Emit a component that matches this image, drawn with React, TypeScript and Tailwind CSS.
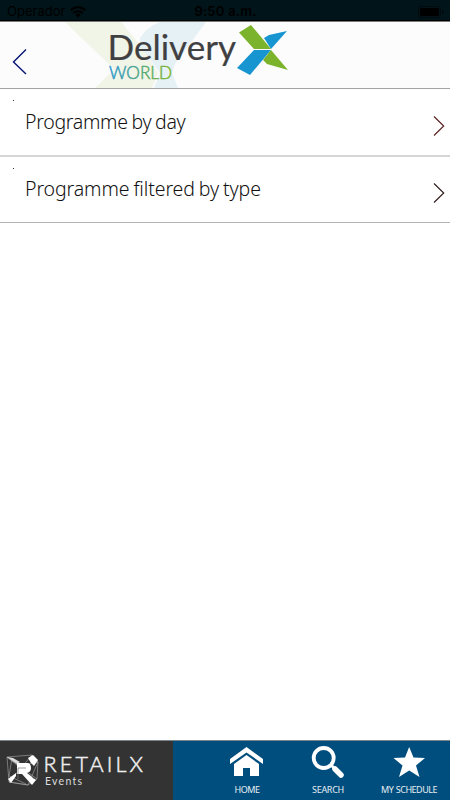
import React from "react";

function StatusBar() {
  return (
    <div className="flex h-[22px] shrink-0 items-center border-b border-[#777b7a] bg-[#001419] pt-[2px] font-['Inter','Liberation_Sans',sans-serif] text-[13px] leading-none text-black shadow-[inset_0_-1px_0_#000]">
      <div className="flex flex-1 items-center gap-[5px] pl-[7px]">
        <span className="w-[58px] tracking-[0.02px]">Operador</span>
        <svg width="16" height="12" viewBox="0 0 16 12" fill="none" stroke="#000" strokeWidth="2">
          <path d="M.8 4.3a10.3 10.3 0 0 1 14.4 0M3.4 7a6.6 6.6 0 0 1 9.2 0" />
          <path d="M5.3 8.800a3.900 3.900 0 0 1 5.400 0L8 11.500z" fill="#000" stroke="none" />
        </svg>
      </div>
      <span className="font-semibold tracking-[0.25px]">9:50 a.m.</span>
      <div className="flex flex-1 justify-end pr-[6px]">
        <svg width="26" height="12" viewBox="0 0 26 12">
          <rect x=".5" y=".5" width="22" height="11" rx="3" fill="none" stroke="#000a0d" />
          <rect x="2" y="2" width="19" height="8" rx="1.5" />
          <path d="M24 4c2 .5 2 3.500 0 4z" fill="#000a0d" />
        </svg>
      </div>
    </div>
  );
}

function Header() {
  return (
    <header className="h-[67px] shrink-0 border-b border-[#a3a3a3] bg-[#fcfcfc]">
      <svg width="450" height="66" viewBox="0 22 450 66" className="block">
        <defs>
          <linearGradient id="world" x1="109" x2="172" y1="0" y2="0" gradientUnits="userSpaceOnUse">
            <stop stopColor="#2697d3" />
            <stop offset="1" stopColor="#7fb72d" />
          </linearGradient>
        </defs>
        <path d="M65 22H121L144 50L158 73L152 88H95L114 69Z" fill="#f1f5e7" />
        <path d="M140 38Q147 27 160 22H206L175 64L172 73L178 88H154L160 73L140 46Z" fill="#e6f1f6" />
        <path d="M26 49.500L13.500 62L26 74" fill="none" stroke="#061474" strokeWidth="1.400" />
        <text x="107.500" y="60" textLength="128.500" lengthAdjust="spacingAndGlyphs" fontFamily="Lato, sans-serif" fontSize="34.500" fill="#404042" stroke="#404042" strokeWidth=".2">Delivery</text>
        <text x="109" y="79" textLength="63" lengthAdjust="spacingAndGlyphs" fontFamily="Lato, sans-serif" fontSize="17" fontWeight="300" fill="url(#world)" stroke="url(#world)" strokeWidth=".5">WORLD</text>
        <path d="M239 32.500L251 25L271 49H254Z" fill="#7cb32c" />
        <path d="M264 38L269 35L287 31L271 49Z" fill="#1795d0" />
        <path d="M254 50H271L250 75L237 68Z" fill="#1795d0" />
        <path d="M271 50L288 70L267 64L263 60Z" fill="#7cb32c" />
      </svg>
    </header>
  );
}

function Row({ label, stroke, className, textClass }: { label: string; stroke: string; className: string; textClass: string }) {
  return (
    <div className={`flex items-center justify-between pl-[13px] pr-[5px] ${className}`}>
      <div className="flex h-full">
        <span className="mt-[11px] h-px w-px bg-[#333]" />
        <span className={`ml-[11px] font-['Noto_Sans','Open_Sans',sans-serif] text-[19.5px] leading-[27px] font-light whitespace-nowrap text-[#111] ${textClass}`}>{label}</span>
      </div>
      <svg width="12" height="20" viewBox="0 0 12 20" className="mt-[7px]" fill="none" stroke={stroke} strokeWidth="1.200">
        <path d="M1 .5L10.700 10L1 19.500" />
      </svg>
    </div>
  );
}

function Brand() {
  return (
    <div className="w-[173px] bg-[#333]">
      <svg width="173" height="59" viewBox="0 741 173 59">
        <g fill="none" stroke="#aaa" strokeWidth=".6">
          <path d="M7 757L32 755L38 762L37 779L28 785L9 782Z" />
          <path d="M9 782L32 755M7 757L18 766L38 762M7 757L37 779M28 785L38 762M9 782L28 785M12 758L9 776L26 784" />
        </g>
        <path d="M7 757L13 758L20 762L17 764Z" fill="#ddd" />
        <path d="M28 758L33 755L38 760L34 766L31 763Z" fill="#fff" />
        <path d="M17 763H27Q31 763 31 768Q31 772 27 773L36 780L32 785L22 774H17Z" fill="#fff" />
        <path d="M16 773V776L11 783L8 779Z" fill="#fff" />
        <path d="M18 779V768H26M28 772L34 779" fill="none" stroke="#777" strokeWidth=".7" />
        <text x="43.500" y="772" textLength="99.500" fontFamily="Lato, sans-serif" fontSize="21.500" fontWeight="300" fill="#eee" stroke="#eee" strokeWidth=".5">RETAILX</text>
        <text x="45" y="785" textLength="37" fontFamily="Lato, sans-serif" fontSize="10.500" fill="#ddd">Events</text>
      </svg>
    </div>
  );
}

function NavItem({ label, children, className }: { label: string; children: React.ReactNode; className: string }) {
  return (
    <div className="flex w-[81px] flex-col items-center pt-[5px]">
      {children}
      <span className={`mt-[2px] font-['Noto_Sans',sans-serif] text-[9px] leading-[12px] whitespace-nowrap text-[#e7eef3] ${className}`}>{label}</span>
    </div>
  );
}

export default function App() {
  return (
    <main className="flex h-[800px] w-[450px] flex-col overflow-hidden bg-white">
      <StatusBar />
      <Header />
      <section className="flex-1">
        <Row label="Programme by day" stroke="#5b2424" className="h-[68px] border-b-2 border-[#d6d6d6]" textClass="pt-[19px] tracking-[-0.3px] [word-spacing:-1px]" />
        <Row label="Programme filtered by type" stroke="#352020" className="h-[66px] border-b border-[#b3b3b3]" textClass="pt-[18px] tracking-[-0.1px] [word-spacing:-1px]" />
      </section>
      <footer className="flex h-[60px] shrink-0 border-t border-[#7b8589] bg-[#004e7e]">
        <Brand />
        <nav className="flex pl-[33px]">
          <NavItem label="HOME" className="pl-px tracking-[-0.45px]">
            <svg width="34" height="36" viewBox="230 746 34 36" fill="#fff">
              <path d="M230 759L246.500 747L263 759V764L246.500 752.500L230 764Z" />
              <path d="M234 764L246.500 755L259 764V776H250V768H243V776H234Z" />
            </svg>
          </NavItem>
          <NavItem label="SEARCH" className="pl-px tracking-[-0.3px]">
            <svg width="34" height="36" viewBox="311 746 34 36" fill="none" stroke="#fff">
              <circle cx="323.700" cy="758" r="10" strokeWidth="3.800" />
              <path d="M331 765L335 769" strokeWidth="3" />
              <path d="M335 769L341 775" strokeWidth="5.500" strokeLinecap="round" />
            </svg>
          </NavItem>
          <NavItem label="MY SCHEDULE" className="pl-px tracking-[-0.5px] [word-spacing:0.7px]">
            <svg width="34" height="36" viewBox="391.500 746 34 36" fill="#fff">
              <path d="M408.700 747L413 757.500L424.500 758L415.500 765.500L419 777L408.700 770.500L398.500 777L402 765.500L393 758L404.500 757.500Z" />
            </svg>
          </NavItem>
        </nav>
      </footer>
    </main>
  );
}
